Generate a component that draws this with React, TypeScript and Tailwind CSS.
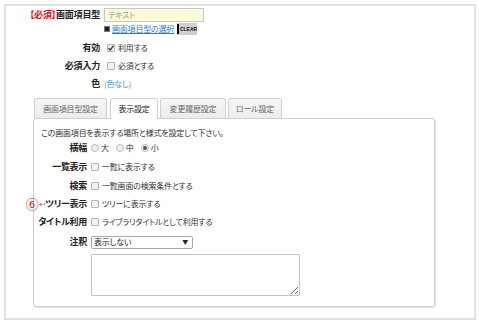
import React from "react";

const font = "[font-family:'Noto_Sans_CJK_JP','Noto_Sans',sans-serif]";

function Box({ checked = false }: { checked?: boolean }) {
  return (
    <span className="relative inline-block w-[8px] h-[8px] border border-[#b5b5b5] bg-[#f2f2f2] rounded-[1px] mr-[3px] shrink-0">
      {checked && (
        <svg viewBox="0 0 8 8" className="absolute left-[-1px] top-[-1px] w-[8px] h-[8px]">
          <path d="M1.5 4.2 L3.2 6 L6.6 1.6" stroke="#333" strokeWidth="1.3" fill="none" />
        </svg>
      )}
    </span>
  );
}

function Radio({ checked = false }: { checked?: boolean }) {
  return (
    <span className="relative inline-flex items-center justify-center w-[8px] h-[8px] rounded-full border border-[#bbb] bg-[#f0f0f0] mr-[2px] shrink-0">
      {checked && <span className="w-[4px] h-[4px] rounded-full bg-[#555]" />}
    </span>
  );
}

function Row({ label, h, children, labelNode }: { label?: string; h: string; children?: React.ReactNode; labelNode?: React.ReactNode }) {
  return (
    <div className={`flex items-center ${h}`}>
      <div className="w-[53px] shrink-0 flex justify-end items-center whitespace-nowrap font-bold text-[9px] tracking-[-0.3px] text-[#222]">
        {labelNode ?? label}
      </div>
      <div className="ml-[4px] flex items-center whitespace-nowrap">{children}</div>
    </div>
  );
}

export default function App() {
  return (
    <div className={`w-[479px] h-[325px] bg-white ${font} text-[8px] leading-[12px] tracking-[-0.2px] text-[#333] [font-feature-settings:'palt'] overflow-hidden`}>
      <div className="ml-[4px] mt-[4px] w-[472px] h-[316px] border-2 border-[#e0e0e0] pt-[2px]">
        {/* top section */}
        <div className="flex items-center h-[14px]">
          <div className="w-[94px] flex justify-end whitespace-nowrap font-bold text-[9px] tracking-[-0.2px]">
            <span className="text-[#e01010]">【必須】</span>
            <span className="text-[#222]">画面項目型</span>
          </div>
          <div className="ml-[4px] w-[100px] h-[14px] bg-[#fbfbd8] border border-[#c8c8c8] flex items-center pl-[3px] text-[#999]">
            テキスト
          </div>
        </div>
        <div className="flex items-center h-[12px] mt-[1px]">
          <div className="w-[94px]" />
          <div className="ml-[4px] flex items-center">
            <span className="w-[4px] h-[4px] bg-[#222] border border-[#777] box-content mr-[2px]" />
            <span className="text-[#1a7fd0] underline">画面項目型の選択</span>
            <span className="ml-[3px] h-[12px] w-[20px] bg-[#cfcfcf] flex items-center">
              <span className="w-[2px] h-[10px] bg-black" />
              <span className="text-[5px] leading-[6px] font-bold text-[#111] ml-[1px] tracking-[0px] [font-family:'Liberation_Sans',sans-serif]">CLEAR</span>
            </span>
          </div>
        </div>
        <div className="flex items-center h-[18px] mt-[4px]">
          <div className="w-[94px] flex justify-end font-bold text-[9px] text-[#222]">有効</div>
          <div className="ml-[7px] flex items-center"><Box checked />利用する</div>
        </div>
        <div className="flex items-center h-[18px]">
          <div className="w-[94px] flex justify-end font-bold text-[9px] text-[#222]">必須入力</div>
          <div className="ml-[7px] flex items-center"><Box />必須とする</div>
        </div>
        <div className="flex items-center h-[18px]">
          <div className="w-[94px] flex justify-end font-bold text-[9px] text-[#222]">色</div>
          <div className="ml-[4px] text-[#3a9ae0]">(色なし)</div>
        </div>

        {/* tabs */}
        <div className="ml-[27px] mt-[5px] w-[402px]">
          <div className="flex items-end h-[20px] pl-[1px] relative z-10">
            <div className="w-[73px] h-[20px] border border-[#d0d0d0] border-b-0 rounded-t-[3px] bg-gradient-to-b from-[#f7f7f7] to-[#ececec] flex items-center justify-center text-[#666]">画面項目型設定</div>
            <div className="ml-[3px] w-[48px] h-[21px] border border-[#cfcfcf] border-b-0 rounded-t-[3px] bg-white flex items-center justify-center text-[#222] -mb-[1px]">表示設定</div>
            <div className="ml-[2px] w-[66px] h-[20px] border border-[#d0d0d0] border-b-0 rounded-t-[3px] bg-gradient-to-b from-[#f7f7f7] to-[#ececec] flex items-center justify-center text-[#666]">変更履歴設定</div>
            <div className="ml-[2px] w-[54px] h-[20px] border border-[#d0d0d0] border-b-0 rounded-t-[3px] bg-gradient-to-b from-[#f7f7f7] to-[#ececec] flex items-center justify-center text-[#666]">ロール設定</div>
          </div>
          <div className="h-[189px] border border-[#cfcfcf] rounded-[3px] shadow-[1px_1px_1px_#e2e2e2] pt-[8px]">
            <div className="h-[12px] pl-[7px] flex items-center whitespace-nowrap">この画面項目を表示する場所と様式を設定して下さい。</div>
            <Row label="横幅" h="h-[18px]">
              <Radio />大<span className="w-[7px]" />
              <Radio />中<span className="w-[7px]" />
              <Radio checked />小
            </Row>
            <Row label="一覧表示" h="h-[20px]"><Box />一覧に表示する</Row>
            <Row label="検索" h="h-[18px]"><Box />一覧画面の検索条件とする</Row>
            <Row
              h="h-[17px]"
              labelNode={
                <>
                  <span className="text-[#e01010] text-[13px] font-normal leading-[12px] tracking-[0px]">⑥</span>
                  <span className="text-[#777] font-normal text-[8px]">↩</span>
                  <span>ツリー表示</span>
                </>
              }
            >
              <Box />ツリーに表示する
            </Row>
            <Row label="タイトル利用" h="h-[19px]"><Box />ライブラリタイトルとして利用する</Row>
            <Row label="注釈" h="h-[22px]">
              <div className="w-[102px] h-[13px] border border-[#a9a9a9] rounded-[2px] flex items-center justify-between px-[2px] text-[#222] bg-white">
                <span>表示しない</span>
                <span className="text-[6px] mr-[2px]">▼</span>
              </div>
            </Row>
            <div className="ml-[57px] mt-[1px]">
              <textarea className="block w-[209px] h-[42px] border border-[#c4c4c4] rounded-[1px] resize" />
            </div>
          </div>
        </div>
      </div>
    </div>
  );
}
